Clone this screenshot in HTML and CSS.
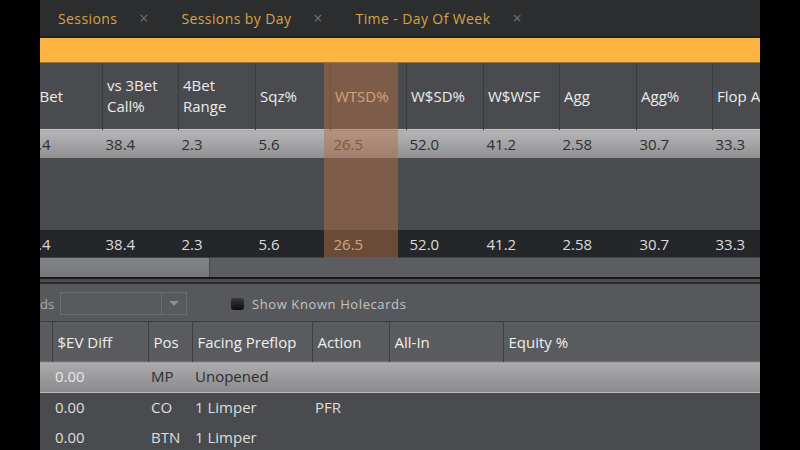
FILE: index.html
```html
<!DOCTYPE html>
<html lang="en">

<head>
    <meta charset="UTF-8">
    <title>Reports</title>
    <link rel="stylesheet" href="styles.css">
</head>

<body>
    <div class="app">
        <!-- Report tabs -->
        <div class="tabs">
            <div class="tab"><span class="tab-title">Sessions</span><span class="tab-close">&times;</span></div>
            <div class="tab"><span class="tab-title">Sessions by Day</span><span class="tab-close">&times;</span></div>
            <div class="tab"><span class="tab-title">Time - Day Of Week</span><span class="tab-close">&times;</span></div>
        </div>
        <div class="accent-bar"></div>

        <!-- Stats grid -->
        <div class="stats">
            <div class="stats-scroll">
                <table class="stats-table">
                    <colgroup>
                        <col style="width:76px">
                        <col style="width:76px">
                        <col style="width:77px">
                        <col style="width:75px">
                        <col style="width:76px">
                        <col style="width:77px">
                        <col style="width:76px">
                        <col style="width:77px">
                        <col style="width:76px">
                        <col style="width:76px">
                    </colgroup>
                    <thead>
                        <tr>
                            <th>3Bet</th>
                            <th>vs 3Bet<br>Call%</th>
                            <th>4Bet<br>Range</th>
                            <th>Sqz%</th>
                            <th class="sorted">WTSD%</th>
                            <th>W$SD%</th>
                            <th>W$WSF</th>
                            <th>Agg</th>
                            <th>Agg%</th>
                            <th>Flop Agg%</th>
                        </tr>
                    </thead>
                    <tbody>
                        <tr class="row-selected">
                            <td>7.4</td>
                            <td>38.4</td>
                            <td>2.3</td>
                            <td>5.6</td>
                            <td class="sorted">26.5</td>
                            <td>52.0</td>
                            <td>41.2</td>
                            <td>2.58</td>
                            <td>30.7</td>
                            <td>33.3</td>
                        </tr>
                        <tr class="row-empty">
                            <td colspan="10"></td>
                        </tr>
                        <tr class="row-total">
                            <td>7.4</td>
                            <td>38.4</td>
                            <td>2.3</td>
                            <td>5.6</td>
                            <td class="sorted">26.5</td>
                            <td>52.0</td>
                            <td>41.2</td>
                            <td>2.58</td>
                            <td>30.7</td>
                            <td>33.3</td>
                        </tr>
                    </tbody>
                </table>
            </div>
            <div class="col-highlight"></div>
        </div>

        <div class="hscroll">
            <div class="hscroll-thumb"></div>
        </div>
        <div class="splitter"></div>

        <!-- Hands toolbar -->
        <div class="toolbar">
            <span class="toolbar-label">ds</span>
            <div class="combo">
                <div class="combo-field"></div>
                <div class="combo-button"><span class="combo-arrow"></span></div>
            </div>
            <label class="check">
                <span class="check-box"></span>
                <span class="check-label">Show Known Holecards</span>
            </label>
        </div>

        <!-- Hands grid -->
        <table class="hands-table">
            <colgroup>
                <col style="width:12px">
                <col style="width:96px">
                <col style="width:44px">
                <col style="width:120px">
                <col style="width:77px">
                <col style="width:114px">
                <col>
            </colgroup>
            <thead>
                <tr>
                    <th></th>
                    <th>$EV Diff</th>
                    <th>Pos</th>
                    <th>Facing Preflop</th>
                    <th>Action</th>
                    <th>All-In</th>
                    <th>Equity %</th>
                </tr>
            </thead>
            <tbody>
                <tr class="row-selected">
                    <td></td>
                    <td class="num">0.00</td>
                    <td>MP</td>
                    <td>Unopened</td>
                    <td></td>
                    <td></td>
                    <td></td>
                </tr>
                <tr>
                    <td></td>
                    <td class="num">0.00</td>
                    <td>CO</td>
                    <td>1 Limper</td>
                    <td>PFR</td>
                    <td></td>
                    <td></td>
                </tr>
                <tr>
                    <td></td>
                    <td class="num">0.00</td>
                    <td>BTN</td>
                    <td>1 Limper</td>
                    <td></td>
                    <td></td>
                    <td></td>
                </tr>
            </tbody>
        </table>
    </div>
</body>

</html>
```

FILE: styles.css
```css
body {
    margin: 0;
    padding: 0;
    background-color: #000;
    font-family: "Open Sans", "Liberation Sans", sans-serif;
    display: flex;
    justify-content: center;
}

.app {
    width: 720px;
    height: 450px;
    overflow: hidden;
    background-color: #4a4b4f;
}

/* Tabs */

.tabs {
    height: 38px;
    background-color: #2c2d2f;
    display: flex;
    align-items: center;
    padding-left: 18px;
    border-bottom: 2px solid #1f1f21;
    box-sizing: border-box;
}

.tab {
    display: flex;
    align-items: center;
    margin-right: 33px;
}

.tab-title {
    color: #d9a443;
    font-size: 14px;
    letter-spacing: 0.4px;
}

.tab-close {
    color: #6f7073;
    font-size: 16px;
    margin-left: 22px;
}

.accent-bar {
    height: 24px;
    background-color: #fdb443;
    border-bottom: 1px solid #9b7436;
}

/* Stats grid */

.stats {
    position: relative;
}

.stats-scroll {
    overflow: hidden;
    width: 720px;
}

.stats-table {
    margin-left: -14px;
    border-collapse: collapse;
    table-layout: fixed;
    width: 762px;
    font-size: 15px;
}

.stats-table th {
    height: 66px;
    padding: 0 4px;
    text-align: left;
    vertical-align: middle;
    font-weight: normal;
    line-height: 21px;
    color: #ececec;
    background-color: #4a4b4f;
    border-left: 1px solid #393a3e;
    white-space: nowrap;
    overflow: hidden;
}

.stats-table th.sorted {
    color: #f6d2b0;
}

.stats-table td {
    padding: 0 3px;
    white-space: nowrap;
    overflow: hidden;
}

.stats-table .row-selected td {
    height: 28px;
    color: #2e2e30;
    background: linear-gradient(#b6b6b8, #a3a3a5 50%, #8f8f91);
    border-top: 1px solid #c9c9cb;
}

.stats-table .row-selected td.sorted {
    color: #5c3d2a;
}

.stats-table .row-empty td {
    height: 72px;
    background-color: #4a4b4f;
}

.stats-table .row-total td {
    height: 27px;
    color: #dcdcdc;
    background-color: #252629;
}

.stats-table .row-total td.sorted {
    color: #f3d6bd;
}

.col-highlight {
    position: absolute;
    top: 0;
    left: 284px;
    width: 74px;
    height: 195px;
    background-color: rgba(176, 112, 70, 0.5);
    pointer-events: none;
}

/* Horizontal scrollbar */

.hscroll {
    height: 19px;
    background-color: #5c5d61;
    border-top: 1px solid #3e3f43;
}

.hscroll-thumb {
    width: 169px;
    height: 19px;
    background: linear-gradient(#838487, #77787b);
    border-right: 1px solid #4a4b4f;
}

.splitter {
    height: 3px;
    background-color: #4b4c50;
    border-top: 2px solid #18181a;
    border-bottom: 2px solid #2a2b2d;
}

/* Toolbar */

.toolbar {
    height: 38px;
    background-color: #57585c;
    display: flex;
    align-items: center;
    border-bottom: 1px solid #3d3e42;
    padding-top: 2px;
    box-sizing: border-box;
}

.toolbar-label {
    color: #a9aaad;
    font-size: 13px;
    width: 20px;
}

.combo {
    display: flex;
    width: 127px;
    height: 23px;
    border: 1px solid #6c6d71;
    box-sizing: border-box;
    background-color: #58595d;
}

.combo-field {
    flex: 1;
}

.combo-button {
    width: 24px;
    border-left: 1px solid #6c6d71;
    display: flex;
    align-items: center;
    justify-content: center;
}

.combo-arrow {
    width: 0;
    height: 0;
    border-left: 5px solid transparent;
    border-right: 5px solid transparent;
    border-top: 5px solid #8d8e91;
}

.check {
    display: flex;
    align-items: center;
    margin-left: 44px;
}

.check-box {
    width: 13px;
    height: 12px;
    border-radius: 3px;
    background: linear-gradient(#3a3a3c, #0c0c0d);
    margin-right: 8px;
}

.check-label {
    color: #c3c4c6;
    font-size: 13px;
    letter-spacing: 0.6px;
}

/* Hands grid */

.hands-table {
    width: 720px;
    border-collapse: collapse;
    table-layout: fixed;
    font-size: 15px;
}

.hands-table th {
    height: 39px;
    padding: 0 5px;
    text-align: left;
    font-weight: normal;
    color: #efefef;
    background-color: #5a5b5f;
    border-left: 1px solid #3e3f43;
    white-space: nowrap;
}

.hands-table th:first-child {
    border-left: none;
}

.hands-table td {
    height: 27px;
    padding: 0 3px 3px;
    color: #dedede;
    white-space: nowrap;
}

.hands-table .row-selected td {
    color: #2d2d2f;
    background: linear-gradient(#acacae, #9a9a9c 50%, #8a8a8c);
    border-top: 1px solid #707175;
    border-bottom: 1px solid #b8b8ba;
}

.hands-table .row-selected td.num {
    color: #e8e8e8;
}
```
